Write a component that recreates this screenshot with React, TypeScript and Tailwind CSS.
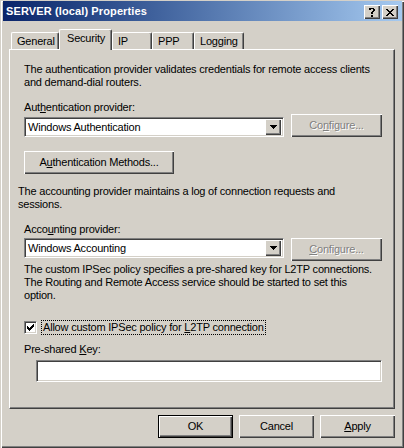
import React from "react";

const raised = "shadow-[inset_1px_1px_#ffffff,inset_-1px_-1px_#404040,inset_-2px_-2px_#808080]";
const sunken =
  "border border-t-[#808080] border-l-[#808080] border-r-white border-b-white shadow-[inset_1px_1px_#404040,inset_-1px_-1px_#d4d0c8]";

const Pixels = ({ rows, className = "" }: { rows: string[]; className?: string }) => (
  <svg width={rows[0].length} height={rows.length} className={className} shapeRendering="crispEdges">
    {rows.flatMap((r, y) =>
      r.split("").map((c, x) => (c === "X" ? <rect key={`${x}-${y}`} x={x} y={y} width={1} height={1} fill="currentColor" /> : null))
    )}
  </svg>
);

const help = ["XXXXX.", "XX..XX", "....XX", "...XX.", "..XX..", "..XX..", "......", "..XX..", "..XX.."];
const close = ["XX....XX", ".XX..XX.", "..XXXX..", "...XX...", "..XXXX..", ".XX..XX.", "XX....XX"];
const check = ["......X", ".....XX", "X...XXX", "XX.XXX.", "XXXXX..", ".XXX...", "..X...."];

const Key = ({ children }: { children: React.ReactNode }) => <span className="underline underline-offset-[1px]">{children}</span>;

const Btn = ({
  children,
  className = "",
  def = false,
  disabled = false,
}: {
  children: React.ReactNode;
  className?: string;
  def?: boolean;
  disabled?: boolean;
}) => (
  <div
    className={`flex items-center justify-center h-[23px] ${def ? "border border-black" : ""} ${raised} ${
      disabled ? "text-[#808080] [text-shadow:1px_1px_0_#ffffff]" : ""
    } ${className}`}
  >
    {children}
  </div>
);

const Combo = ({ value }: { value: string }) => (
  <div className={`w-[260px] h-[20px] bg-white flex items-center pl-[3px] pr-[2px] ${sunken}`}>
    <span className="flex-1">{value}</span>
    <div className={`w-[16px] h-[16px] bg-[#d4d0c8] flex items-center justify-center ${raised}`}>
      <svg width="7" height="4" shapeRendering="crispEdges">
        <path d="M0 0h7L3.5 4z" fill="black" />
      </svg>
    </div>
  </div>
);

const Tab = ({ label, w, active = false }: { label: string; w: string; active?: boolean }) => (
  <div
    className={`${w} flex items-start border-l border-t border-white border-r border-r-[#404040] rounded-t-[2px] shadow-[inset_-1px_0_#808080] bg-[#d4d0c8] ${
      active ? "h-[21px] -mb-px relative z-10 pl-[7px] pt-[2px]" : "h-[17px] pl-[5px] pt-[2px]"
    }`}
  >
    {label}
  </div>
);

export default function App() {
  return (
    <div className="w-[404px] h-[448px] bg-[#d4d0c8] flex flex-col font-['Liberation_Sans',Arial,sans-serif] text-[11px] leading-[13px] tracking-[-0.2px] text-black shadow-[inset_1px_1px_#d4d0c8,inset_2px_2px_#ffffff,inset_-1px_-1px_#404040,inset_-2px_-2px_#808080]">
      {/* title bar */}
      <div className="mt-px ml-[3px] mr-[2px] h-[20px] bg-linear-to-r from-[#0a246a] to-[#a6caf0] flex items-start pl-[3px] pr-[4px]">
        <span className="font-bold text-white mt-[4px] tracking-[0.12px]">SERVER (local) Properties</span>
        <div className="ml-auto flex gap-[2px] mt-[4px]">
          <div className={`w-[16px] h-[14px] bg-[#d4d0c8] flex items-center justify-center ${raised}`}>
            <Pixels rows={help} />
          </div>
          <div className={`w-[16px] h-[14px] bg-[#d4d0c8] flex items-center justify-center ${raised}`}>
            <Pixels rows={close} />
          </div>
        </div>
      </div>

      {/* tabs */}
      <div className="mt-[8px] ml-[11px] h-[20px] flex items-end">
        <Tab label="General" w="w-[48px]" />
        <Tab label="Security" w="w-[53px]" active />
        <Tab label="IP" w="w-[40px]" />
        <Tab label="PPP" w="w-[42px]" />
        <Tab label="Logging" w="w-[50px]" />
      </div>

      {/* panel */}
      <div className="ml-[9px] w-[386px] h-[360px] border border-t-white border-l-white border-r-[#404040] border-b-[#404040] shadow-[inset_-1px_-1px_#808080] flex flex-col">
        <p className="mt-[13px] ml-[14px]">
          The authentication provider validates credentials for remote access clients
          <br />
          and demand-dial routers.
        </p>
        <p className="mt-[12px] ml-[14px]">
          Aut<Key>h</Key>entication provider:
        </p>
        <div className="ml-[14px] flex items-end gap-[7px]">
          <Combo value="Windows Authentication" />
          <Btn className="w-[91px]" disabled>
            Co<Key>n</Key>figure...
          </Btn>
        </div>
        <Btn className="mt-[14px] ml-[14px] w-[150px]">
          A<Key>u</Key>thentication Methods...
        </Btn>

        <p className="mt-[11px] ml-[8px]">
          The accounting provider maintains a log of connection requests and
          <br />
          sessions.
        </p>
        <p className="mt-[12px] ml-[14px]">
          Acco<Key>u</Key>nting provider:
        </p>
        <div className="mt-[2px] ml-[14px] flex items-start gap-[7px]">
          <Combo value="Windows Accounting" />
          <Btn className="w-[91px]" disabled>
            <Key>C</Key>onfigure...
          </Btn>
        </div>

        <p className="mt-[2px] ml-[14px]">
          The custom IPSec policy specifies a pre-shared key for L2TP connections.
          <br />
          The Routing and Remote Access service should be started to set this
          <br />
          option.
        </p>

        <div className="mt-[18px] ml-[14px] flex items-center gap-[4px]">
          <div className={`w-[13px] h-[13px] bg-white flex items-center justify-center ${sunken}`}>
            <Pixels rows={check} />
          </div>
          <span className="border border-dotted border-black px-[1px] leading-[13px]">
            Allow custom IPSec policy for <Key>L</Key>2TP connection
          </span>
        </div>

        <p className="mt-[8px] ml-[14px]">
          Pre-shared <Key>K</Key>ey:
        </p>
        <div className={`mt-[4px] ml-[26px] w-[346px] h-[22px] bg-white ${sunken}`} />
      </div>

      {/* dialog buttons */}
      <div className="mt-[6px] ml-[9px] w-[386px] flex justify-end gap-[6px]">
        <Btn className="w-[75px]" def>
          OK
        </Btn>
        <Btn className="w-[75px]">Cancel</Btn>
        <Btn className="w-[75px]">
          <Key>A</Key>pply
        </Btn>
      </div>
    </div>
  );
}
